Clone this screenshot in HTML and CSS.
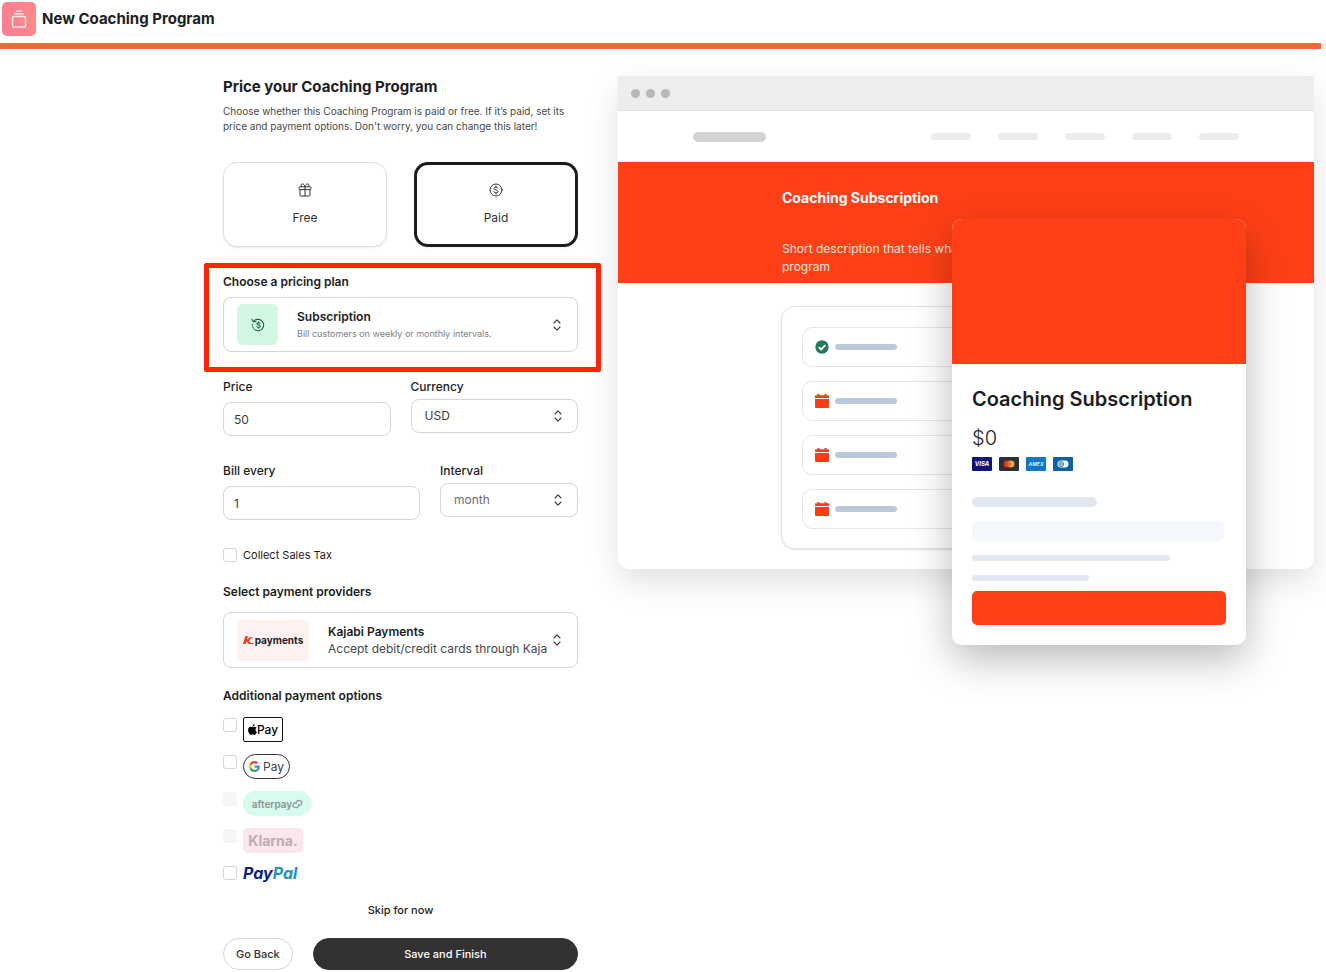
FILE: index.html
```html
<!DOCTYPE html>
<html lang="en">
<head>
<meta charset="utf-8">
<meta name="viewport" content="width=device-width, initial-scale=1">
<title>New Coaching Program</title>
<link rel="stylesheet" href="styles.css">
</head>
<body>
<svg class="sprite" aria-hidden="true">
  <symbol id="updown" viewBox="0 0 10 14"><path d="M2 5l3-3.2L8 5M2 9l3 3.2L8 9" fill="none" stroke="currentColor" stroke-width="1.1" stroke-linecap="round" stroke-linejoin="round"/></symbol>
  <symbol id="calendar" viewBox="0 0 14 14"><path d="M2.500 0h2v1.200h5V0h2v1.200h1.700q.8 0 .8.800v2H0V2q0-.8.800-.8h1.700zM0 5h14v8q0 1-1 1H1q-1 0-1-1z" fill="#f93d14"/></symbol>
</svg>

<header class="topbar">
  <span class="topbar-icon">
    <svg width="16" height="18" viewBox="0 0 16 18" fill="none" stroke="#ffeae6" stroke-width="1.500" stroke-linecap="round" stroke-linejoin="round"><path d="M5.500 1h5M3.500 3.800h9"/><rect x="1.500" y="6.600" width="13" height="10.400" rx="1.600"/></svg>
  </span>
  <span class="topbar-title">New Coaching Program</span>
</header>
<div class="progress"><div class="progress-fill"></div></div>

<main class="layout">
  <form class="form">
    <h1 class="title">Price your Coaching Program</h1>
    <p class="lead">Choose whether this Coaching Program is paid or free. If it’s paid, set its price and payment options. Don't worry, you can change this later!</p>

    <div class="choices">
      <button type="button" class="choice">
        <svg width="14" height="14" viewBox="0 0 14 14" fill="none" stroke="currentColor" stroke-width="1" stroke-linejoin="round"><rect x="1" y="3.800" width="12" height="2.800" rx=".7"/><path d="M2 6.600v5.600q0 .8.800.8h8.400q.8 0 .8-.8V6.600M7 3.800V13M7 3.800C6.500 2 5.600.9 4.400.9 2.800.9 2.500 3 4 3.800M7 3.800C7.500 2 8.400.9 9.600.9c1.600 0 1.900 2.100.4 2.900"/></svg>
        <span>Free</span>
      </button>
      <button type="button" class="choice choice-selected">
        <svg width="14" height="14" viewBox="0 0 14 14" fill="none" stroke="currentColor" stroke-width="1" stroke-linecap="round"><circle cx="7" cy="7" r="6"/><path d="M9 5.300C8.700 4.500 8 4.200 7 4.200c-1.200 0-2 .5-2 1.300C5 7.500 9.100 6.500 9.100 8.500c0 .8-.9 1.300-2.100 1.300S5.100 9.400 4.900 8.600M7 3v1.200M7 9.800V11"/></svg>
        <span>Paid</span>
      </button>
    </div>

    <section class="plan">
      <h2 class="section-label" id="plan-label">Choose a pricing plan</h2>
      <button type="button" class="picker" aria-haspopup="listbox" aria-labelledby="plan-label">
        <span class="plan-icon">
          <svg width="14" height="14" viewBox="0 0 14 14" fill="none" stroke="#1f5f4c" stroke-width="1.100" stroke-linecap="round" stroke-linejoin="round"><path d="M2.500 3.500A5.700 5.700 0 1 1 4.300 12.100"/><path d="M1 1.300l1.300 2.500L5 3.500M1.300 6.600v.6M1.700 9l.3.600M2.800 10.800l.4.400"/><path d="M9.100 5.500C8.800 4.900 8.200 4.700 7.500 4.700c-1 0-1.600.4-1.600 1C5.900 7.300 9.200 6.500 9.200 8.200c0 .7-.7 1.100-1.700 1.100S6 8.900 5.800 8.400M7.500 3.800v.9M7.500 9.300v.9"/></svg>
        </span>
        <span class="picker-text">
          <span class="picker-name">Subscription</span>
          <span class="picker-hint">Bill customers on weekly or monthly intervals.</span>
        </span>
        <svg class="arrows" width="10" height="14"><use href="#updown"/></svg>
      </button>
    </section>

    <div class="fields fields-even">
      <div class="field">
        <label for="price">Price</label>
        <input class="control" id="price" type="text" value="50">
      </div>
      <div class="field field-select">
        <label for="currency">Currency</label>
        <div class="select-wrap">
          <select class="control" id="currency"><option>USD</option></select>
          <svg class="arrows" width="10" height="14"><use href="#updown"/></svg>
        </div>
      </div>
    </div>

    <div class="fields fields-bill">
      <div class="field">
        <label for="every">Bill every</label>
        <input class="control" id="every" type="text" value="1">
      </div>
      <div class="field field-select">
        <label for="interval">Interval</label>
        <div class="select-wrap">
          <select class="control muted" id="interval"><option>month</option></select>
          <svg class="arrows" width="10" height="14"><use href="#updown"/></svg>
        </div>
      </div>
    </div>

    <label class="tax"><input class="check" type="checkbox"><span>Collect Sales Tax</span></label>

    <h2 class="section-label providers-label" id="prov-label">Select payment providers</h2>
    <button type="button" class="picker picker-provider" aria-haspopup="listbox" aria-labelledby="prov-label">
      <span class="provider-logo">
        <svg width="11" height="9" viewBox="0 0 11 9"><path d="M2.400 0h2.500L4 3.400 7.400.9h2.400L6 4.200c.4 1.800 1 2.700 2 2.700h2.600L10.300 8H6.800C5.200 8 4.400 7 4.100 5.400L3 6.300 2.500 8H0z" fill="#f03a22"/></svg>
        <span>payments</span>
      </span>
      <span class="picker-text">
        <span class="picker-name">Kajabi Payments</span>
        <span class="picker-detail">Accept debit/credit cards through Kaja</span>
      </span>
      <svg class="arrows" width="10" height="14"><use href="#updown"/></svg>
    </button>

    <h2 class="section-label extra-label">Additional payment options</h2>
    <div class="options">
      <label class="option"><input class="check" type="checkbox">
        <span class="logo logo-apple"><svg width="9" height="11" viewBox="2 0 20 24"><path d="M12.152 6.896c-.948 0-2.415-1.078-3.960-1.040-2.040.027-3.910 1.183-4.961 3.014-2.117 3.675-.546 9.103 1.519 12.090 1.013 1.454 2.208 3.090 3.792 3.039 1.520-.065 2.090-.987 3.935-.987 1.831 0 2.350.987 3.960.948 1.637-.026 2.676-1.480 3.676-2.948 1.156-1.688 1.636-3.325 1.662-3.415-.039-.013-3.182-1.221-3.220-4.857-.026-3.040 2.480-4.494 2.597-4.559-1.429-2.090-3.623-2.324-4.390-2.376-2-.156-3.675 1.090-4.610 1.090zM15.530 3.830c.843-1.012 1.400-2.427 1.245-3.830-1.207.052-2.662.805-3.532 1.818-.780.896-1.454 2.338-1.273 3.714 1.338.104 2.715-.688 3.560-1.701"/></svg>Pay</span></label>
      <label class="option"><input class="check" type="checkbox">
        <span class="logo logo-google"><svg width="11" height="11" viewBox="0 0 48 48"><path fill="#ea4335" d="M24 9.500c3.540 0 6.710 1.220 9.210 3.600l6.850-6.850C35.900 2.380 30.470 0 24 0 14.620 0 6.510 5.380 2.560 13.220l7.980 6.190C12.430 13.720 17.740 9.500 24 9.500z"/><path fill="#4285f4" d="M46.980 24.550c0-1.570-.15-3.090-.38-4.550H24v9.020h12.940c-.58 2.960-2.260 5.480-4.780 7.180l7.730 6c4.510-4.180 7.090-10.360 7.090-17.650z"/><path fill="#fbbc05" d="M10.530 28.590c-.48-1.450-.76-2.990-.76-4.590s.27-3.140.76-4.590l-7.980-6.190C.92 16.460 0 20.120 0 24c0 3.880.92 7.540 2.560 10.780l7.970-6.190z"/><path fill="#34a853" d="M24 48c6.480 0 11.930-2.130 15.890-5.810l-7.730-6c-2.150 1.450-4.920 2.300-8.160 2.300-6.260 0-11.570-4.220-13.470-9.910l-7.980 6.190C6.510 42.620 14.620 48 24 48z"/></svg>Pay</span></label>
      <label class="option"><input class="check" type="checkbox" disabled>
        <span class="logo logo-afterpay">afterpay<svg width="11" height="10" viewBox="0 0 11 10" fill="none" stroke="currentColor" stroke-width="1.200" stroke-linejoin="round"><path d="M4.300 3.700L5 2.200Q5.500 1 6.700 1.300L9 2Q10.600 2.500 9.900 4L9.300 5.300Q8.700 6.500 7.400 6.100L6 5.700"/><path d="M6.700 6.300L6 7.800Q5.500 9 4.300 8.700L2 8Q.4 7.500 1.100 6L1.700 4.700Q2.300 3.500 3.600 3.900L5 4.300"/></svg></span></label>
      <label class="option"><input class="check" type="checkbox" disabled>
        <span class="logo logo-klarna">Klarna.</span></label>
      <label class="option option-paypal"><input class="check" type="checkbox">
        <span class="logo-paypal">Pay<span class="pal">Pal</span></span></label>
    </div>

    <button type="button" class="skip">Skip for now</button>
    <div class="actions">
      <button type="button" class="btn">Go Back</button>
      <button type="submit" class="btn btn-primary">Save and Finish</button>
    </div>
  </form>

  <aside class="preview">
    <div class="window">
      <div class="window-bar"><i></i><i></i><i></i></div>
      <div class="site-nav">
        <span class="site-logo"></span>
        <span class="site-links"><i></i><i></i><i></i><i></i><i></i></span>
      </div>
      <div class="hero">
        <h3 class="hero-title">Coaching Subscription</h3>
        <p class="hero-text">Short description that tells what<br>program</p>
      </div>
      <div class="site-body">
        <div class="lessons">
          <div class="lesson"><svg width="14" height="14" viewBox="0 0 14 14"><circle cx="7" cy="7" r="6.700" fill="#237a5d"/><path d="M3.800 7.100L6.200 9.400l4.200-4.300" fill="none" stroke="#fff" stroke-width="1.800"/></svg><i></i></div>
          <div class="lesson"><svg width="14" height="14"><use href="#calendar"/></svg><i></i></div>
          <div class="lesson"><svg width="14" height="14"><use href="#calendar"/></svg><i></i></div>
          <div class="lesson"><svg width="14" height="14"><use href="#calendar"/></svg><i></i></div>
        </div>
      </div>
    </div>
    <div class="checkout">
      <div class="checkout-image"></div>
      <div class="checkout-body">
        <h3 class="checkout-title">Coaching Subscription</h3>
        <p class="checkout-price">$0</p>
        <div class="cards">
          <svg width="20" height="14" viewBox="0 0 20 14"><rect width="20" height="14" rx="1" fill="#12127a"/><text class="brand brand-visa" x="10" y="9" text-anchor="middle">VISA</text></svg>
          <svg width="20" height="14" viewBox="0 0 20 14"><rect width="20" height="14" rx="1" fill="#2b2f38"/><circle cx="8" cy="7" r="3.500" fill="#e0301e"/><circle cx="12" cy="7" r="3.500" fill="#efa03c"/><path d="M10 4.100a3.500 3.500 0 0 1 0 5.800 3.500 3.500 0 0 1 0-5.800" fill="#ee6a24"/></svg>
          <svg width="20" height="14" viewBox="0 0 20 14"><rect width="20" height="14" rx="1" fill="#0f78c4"/><text class="brand brand-amex" x="10" y="9" text-anchor="middle">AMEX</text></svg>
          <svg width="20" height="14" viewBox="0 0 20 14"><rect width="20" height="14" rx="1" fill="#0a62a5"/><rect x="4.500" y="3.500" width="11" height="7" rx="3.500" fill="#fff"/><circle cx="8.200" cy="7" r="2.500" fill="none" stroke="#0a62a5" stroke-width=".8"/><path d="M7.500 5.500v3M9 5.500v3" stroke="#0a62a5" stroke-width=".8"/></svg>
        </div>
        <div class="ghosts">
          <i class="ghost ghost-label"></i>
          <i class="ghost ghost-field"></i>
          <i class="ghost ghost-long"></i>
          <i class="ghost ghost-short"></i>
        </div>
        <div class="checkout-cta"></div>
      </div>
    </div>
  </aside>
</main>
</body>
</html>
```

FILE: styles.css
```css
* { box-sizing: border-box; }
body {
  margin: 0;
  background: #fff;
  color: #1c1d1f;
  font-family: Inter, "Liberation Sans", sans-serif;
  font-size: 12px;
  line-height: 16px;
}
h1, h2, h3, p { margin: 0; }
button, input, select { font: inherit; color: inherit; }
button { cursor: pointer; }
i, svg { display: block; flex: none; }
.sprite { position: absolute; width: 0; height: 0; }

.topbar { display: flex; align-items: center; gap: 6px; height: 43px; padding: 0 2px 5px; }
.topbar-icon {
  display: flex; align-items: center; justify-content: center;
  width: 34px; height: 34px; border-radius: 5px;
  background: linear-gradient(90deg, #ff7d92, #fc8a8a);
}
.topbar-title { font-size: 15px; line-height: 20px; font-weight: 700; }
.progress { background: #fdf1ee; height: 6px; }
.progress-fill { width: 99.6%; height: 100%; background: #fb643a; }

.layout {
  display: grid;
  grid-template-columns: minmax(16px, 223fr) 355px 40px minmax(0, 696fr) 12px;
  align-items: start;
}
.form { grid-column: 2; display: flex; flex-direction: column; padding-top: 28px; }
.preview { grid-column: 4; position: relative; margin-top: 27px; }

.title { font-size: 15px; line-height: 20px; font-weight: 700; }
.lead { margin-top: 7px; font-size: 10px; line-height: 15px; color: #46484c; }

.choices { display: grid; grid-template-columns: 1fr 1fr; gap: 27px; margin-top: 28px; }
.choice {
  display: flex; flex-direction: column; align-items: center; justify-content: center; gap: 13px;
  height: 85px; padding: 0 0 1px; border: 1px solid #dfe0e1; border-radius: 14px; background: #fff;
  box-shadow: 0 1px 2px rgba(0, 0, 0, .08); color: #333437;
}
.choice-selected { border: 3px solid #1b1c1e; }

.section-label { font-size: 12px; line-height: 18px; font-weight: 600; }
.plan { position: relative; margin-top: 26px; }
.plan::after {
  content: ""; position: absolute; inset: -10px -23px -20px -19px;
  border: 5px solid #fb2605; border-radius: 2px; pointer-events: none;
}
.picker {
  display: flex; align-items: center; width: 100%; height: 55px; margin-top: 6px; padding: 0 15px 0 13px;
  border: 1px solid #d3d5d7; border-radius: 8px; background: #fff; text-align: left;
}
.picker-text { display: flex; flex-direction: column; flex: 1; min-width: 0; margin-left: 19px; white-space: nowrap; }
.picker-name { font-size: 12px; line-height: 18px; font-weight: 600; }
.picker-hint { font-size: 9px; color: #808286; }
.picker-detail { font-size: 12px; color: #46484c; }
.plan-icon {
  display: flex; align-items: center; justify-content: center;
  width: 41px; height: 41px; border-radius: 6px; background: #d3f7e0;
}
.arrows { color: #3b3d40; }

.fields { display: grid; gap: 20px; margin-top: 27px; align-items: start; }
.fields-even { grid-template-columns: 1fr 1fr; }
.fields-bill { grid-template-columns: 197fr 138fr; }
.field { display: flex; flex-direction: column; gap: 7px; min-width: 0; }
.field-select { gap: 4px; }
.field label { font-weight: 500; }
.control {
  width: 100%; height: 34px; padding: 0 10px; border: 1px solid #d3d5d7; border-radius: 8px;
  background: #fff; color: #3a3c3f;
}
.select-wrap { position: relative; }
.select-wrap .control { display: block; appearance: none; padding: 0 13px; }
.select-wrap .muted { color: #6b6d70; }
.select-wrap .arrows { position: absolute; right: 15px; top: 10px; pointer-events: none; }

.check {
  appearance: none; flex: none; width: 14px; height: 14px; margin: 0;
  border: 1px solid #d3d5d7; border-radius: 3px; background: #fff;
}
.check:disabled { border-color: #f4f4f4; background: #f6f6f6; }
.tax { display: flex; align-items: center; gap: 6px; margin-top: 27px; font-size: 11px; color: #1c1d1f; }

.providers-label { margin-top: 20px; }
.picker-provider { height: 56px; margin-top: 11px; }
.provider-logo {
  display: flex; align-items: center; justify-content: center; gap: 1px;
  width: 72px; height: 41px; border-radius: 5px; background: #fef1f0; font-size: 10px; font-weight: 700;
}
.extra-label { margin-top: 19px; }
.options { display: flex; flex-direction: column; align-items: flex-start; gap: 12px; margin-top: 12px; }
.option { display: flex; align-items: flex-start; gap: 6px; height: 25px; }
.option .check { margin-top: 1px; }
.option-paypal { height: 16px; align-items: center; }
.option-paypal .check { margin-top: 0; }
.logo { display: flex; align-items: center; justify-content: center; height: 25px; }
.logo-apple { width: 40px; border: 1px solid #111; border-radius: 2px; color: #000; font-weight: 500; }
.logo-google { gap: 3px; width: 47px; border: 1px solid #333; border-radius: 13px; color: #3c4043; }
.logo-afterpay { width: 69px; border-radius: 13px; background: #d8fbf0; color: #8b9390; font-size: 10px; font-weight: 600; }
.logo-klarna { width: 60px; border-radius: 5px; background: #fde5ed; color: #b7aeb2; font-size: 14px; font-weight: 700; }
.logo-paypal { font-size: 16px; font-weight: 700; font-style: italic; color: #0c1f80; }
.pal { color: #2790c3; }

.skip { align-self: center; margin-top: 21px; padding: 0; border: 0; background: none; font-size: 11px; font-weight: 500; }
.actions { display: flex; gap: 20px; margin-top: 20px; }
.btn {
  height: 32px; padding: 0 12px; border: 1px solid #d4d5d7; border-radius: 16px; background: #fff;
  font-size: 11px; font-weight: 500; color: #333437;
}
.btn-primary { flex: 1; border-color: #333230; background: #333230; color: #fff; }

.window { overflow: hidden; border-radius: 0 0 12px 12px; background: #fff; }
.preview::before {
  content: ""; position: absolute; inset: 0; z-index: -1; border-radius: 0 0 12px 12px;
  box-shadow: 0 13px 32px rgba(0, 0, 0, .12);
}
.window-bar { display: flex; align-items: center; gap: 6px; height: 35px; padding: 0 13px; border-bottom: 1px solid #dfe1e3; background: #ecedef; }
.window-bar i { width: 9px; height: 9px; border-radius: 50%; background: #b7b8b9; }
.site-nav { display: flex; align-items: center; justify-content: space-between; height: 51px; padding: 0 75px; }
.site-logo { width: 73px; height: 10px; border-radius: 5px; background: #d3d3d4; }
.site-links { display: flex; gap: 27px; }
.site-links i { width: 40px; height: 7px; border-radius: 4px; background: #ececed; }
.hero { height: 121px; padding: 26px 0 0 164px; background: #ff4016; color: #fff; }
.hero-title { font-size: 14px; line-height: 20px; font-weight: 700; }
.hero-text { margin-top: 32px; line-height: 18px; color: #ffe4dd; }
.site-body { padding: 23px 0 20px 163px; }
.lessons {
  display: flex; flex-direction: column; gap: 14px; width: 370px; padding: 20px 20px 19px;
  border: 1px solid #e4e5e6; border-radius: 14px; box-shadow: 0 1px 2px rgba(0, 0, 0, .14);
}
.lesson { display: flex; align-items: center; gap: 6px; height: 40px; padding: 0 12px; border: 1px solid #e4e5e6; border-radius: 10px; }
.lesson i { width: 62px; height: 6px; border-radius: 3px; background: #b9c9d9; }

.checkout {
  position: absolute; top: 143px; right: 68px; width: 294px; overflow: hidden;
  border-radius: 10px; background: #fff; box-shadow: 0 14px 40px rgba(0, 0, 0, .28);
}
.checkout-image { height: 145px; background: #ff4016; }
.checkout-body { padding: 23px 20px 20px; }
.checkout-title { font-size: 20px; line-height: 24px; font-weight: 600; }
.checkout-price { margin-top: 15px; font-size: 20px; line-height: 24px; font-weight: 300; }
.cards { display: flex; gap: 7px; margin-top: 7px; }
.brand { font-weight: 700; font-style: italic; fill: #fff; }
.brand-visa { font-size: 6px; }
.brand-amex { font-size: 5px; fill: #cfe8fa; }
.ghosts { display: flex; flex-direction: column; gap: 14px; margin-top: 26px; }
.ghost { height: 6px; border-radius: 5px; background: #e1e6f0; }
.ghost-label { width: 125px; height: 10px; }
.ghost-field { width: 252px; height: 20px; background: #f4f7fc; }
.ghost-long { width: 198px; }
.ghost-short { width: 117px; }
.checkout-cta { height: 34px; margin-top: 10px; border-radius: 5px; background: #ff4016; }
```
